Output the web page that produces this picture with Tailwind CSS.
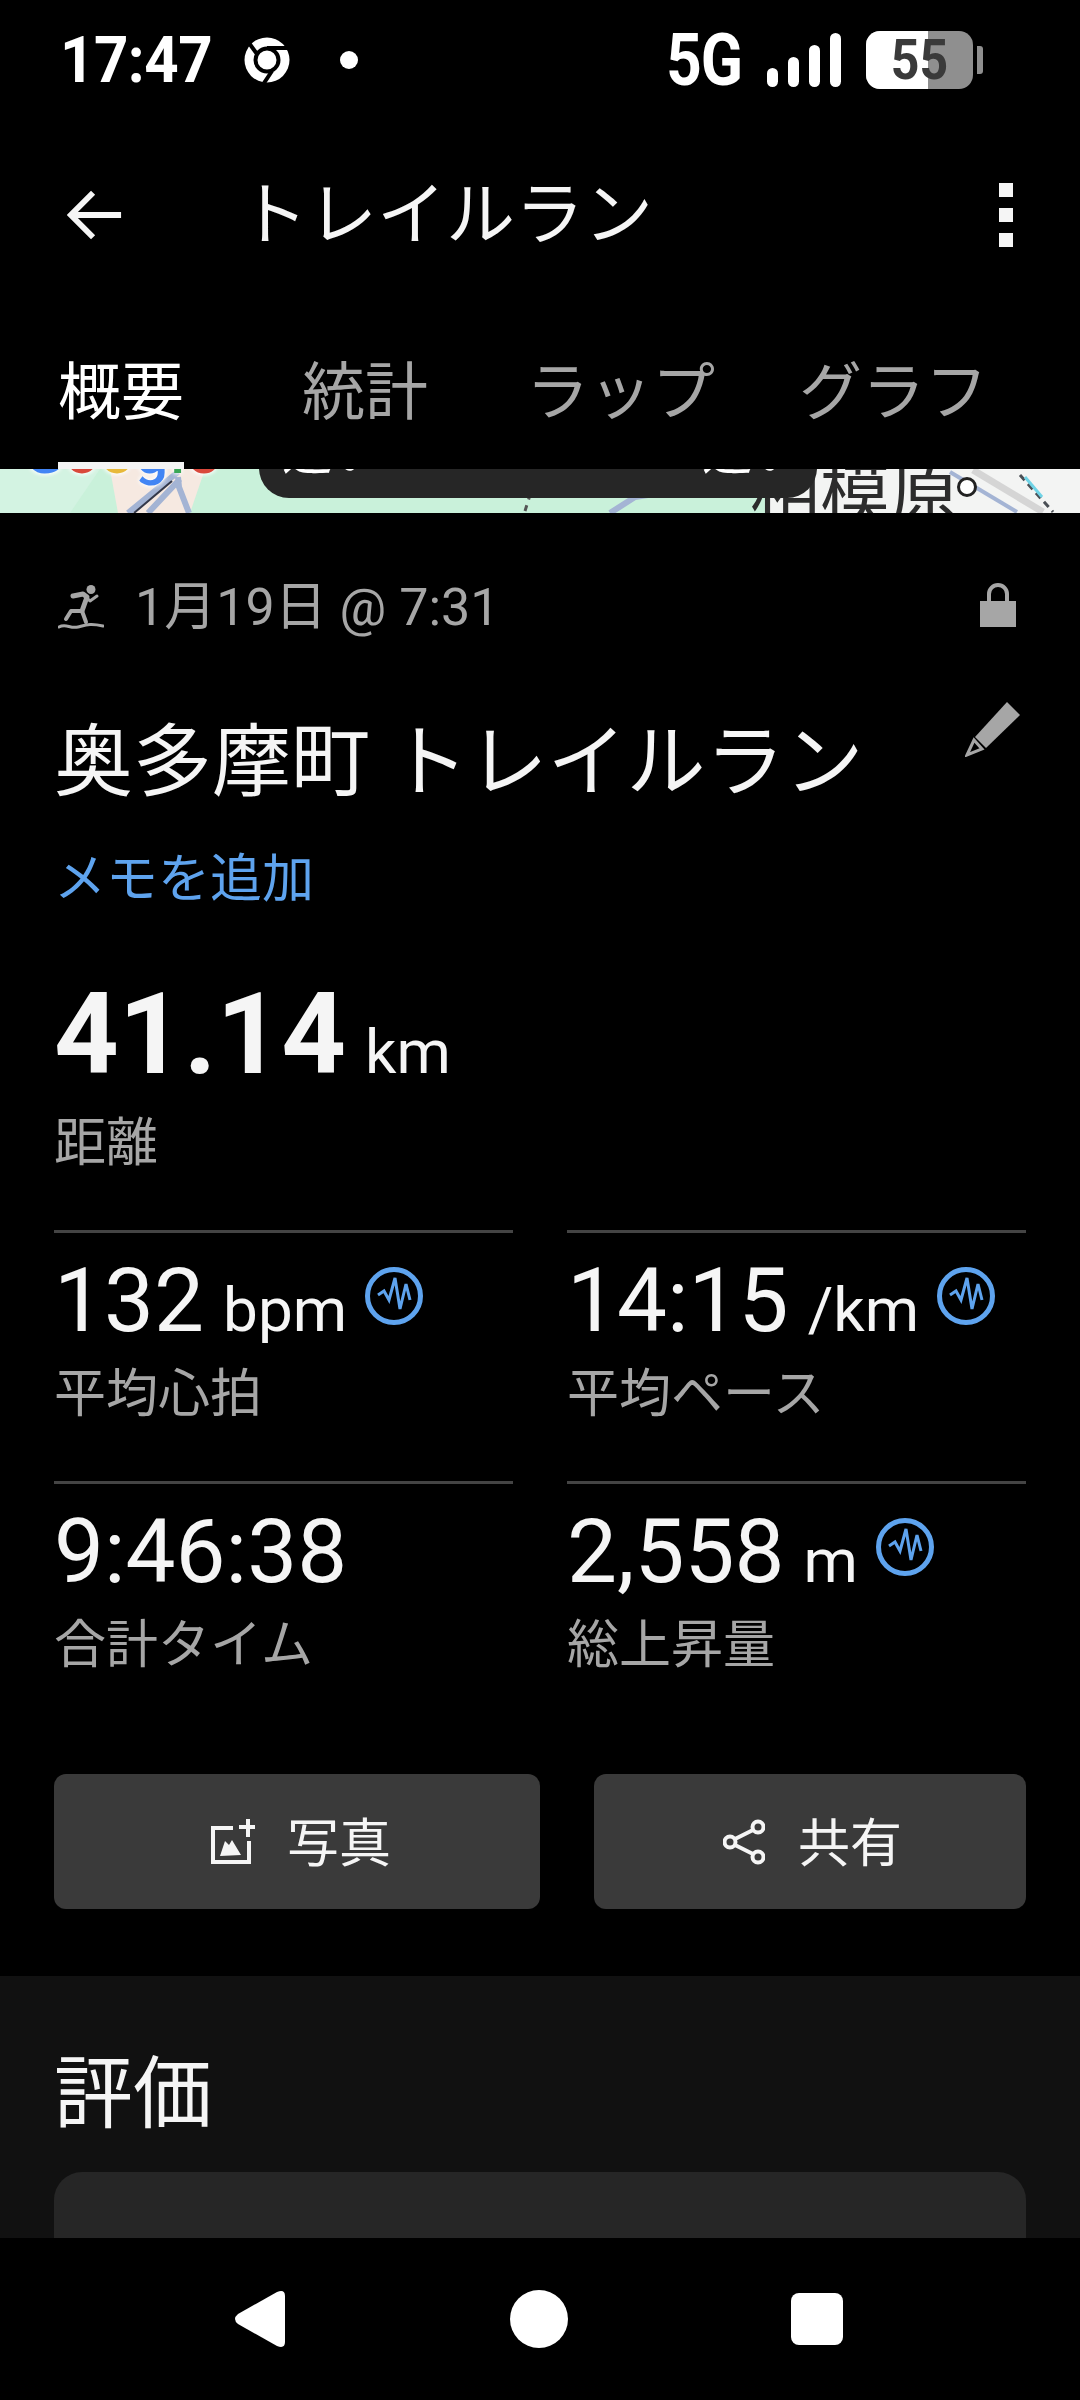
<!DOCTYPE html>
<html lang="ja">
<head>
<meta charset="utf-8">
<script src="https://cdn.jsdelivr.net/npm/@tailwindcss/browser@4"></script>
</head>
<body class="bg-black">
<div class="relative w-[1080px] h-[2400px] overflow-hidden bg-black text-white font-['Roboto','Noto_Sans_CJK_JP',sans-serif]">

  <!-- status bar -->
  <div class="h-[120px] pl-[60px] pr-[97px] flex items-center justify-between">
    <div class="flex items-center">
      <span class="text-[60px] font-bold leading-none tracking-[-0.5px] w-[184px] scale-y-[1.08] origin-center">17:47</span>
      <svg class="w-[46px] h-[46px]" viewBox="0 0 46 46" fill="none" stroke="#000"><circle cx="23" cy="23" r="22.5" fill="#fff" stroke="none"/><circle cx="23" cy="23" r="11.5" stroke-width="4"/><path d="M5 6L13 17M23 11H46M28 34L20 46" stroke-width="4"/></svg>
      <span class="ml-[50px] w-[18px] h-[18px] rounded-full bg-white"></span>
    </div>
    <div class="flex items-center">
      <span class="text-[62px] font-bold leading-none tracking-[-1px] scale-y-[1.18] origin-center">5G</span>
      <svg class="ml-[25px] w-[74px] h-[54px]" viewBox="0 0 74 54" fill="#fff"><rect x="0" y="35" width="11" height="19" rx="5.5"/><rect x="21" y="24" width="11" height="30" rx="5.5"/><rect x="42" y="12" width="11" height="42" rx="5.5"/><rect x="63" y="0" width="11" height="54" rx="5.5"/></svg>
      <div class="ml-[25px] relative w-[107px] h-[58px] rounded-[14px] bg-[#8f8f8f] overflow-hidden flex items-center justify-center">
        <div class="absolute inset-y-0 left-0 w-[62px] bg-white"></div>
        <span class="relative text-[50px] font-bold leading-none text-[#3a3a3a] scale-y-[1.1]">55</span>
      </div>
      <div class="ml-[4px] w-[6px] h-[28px] rounded-r-[3px] bg-[#8f8f8f]"></div>
    </div>
  </div>

  <!-- toolbar -->
  <div class="h-[188px] pl-[67px] pr-[67px] pt-[2px] flex items-center">
    <svg class="w-[56px] h-[52px]" viewBox="0 0 58 52" fill="none" stroke="#f5f5f5" stroke-width="6"><path d="M3 26H56M27 3L4 26L27 49"/></svg>
    <span class="ml-[116px] text-[69px] leading-none text-[#f5f5f5]">トレイルラン</span>
    <div class="ml-auto flex flex-col gap-[11px]">
      <span class="block w-[14px] h-[14px] bg-[#f5f5f5]"></span>
      <span class="block w-[14px] h-[14px] bg-[#f5f5f5]"></span>
      <span class="block w-[14px] h-[14px] bg-[#f5f5f5]"></span>
    </div>
  </div>

  <!-- tabs -->
  <div class="h-[161px] pt-[53px] pl-[58px] flex items-start text-[63px] leading-none text-[#a6a6a6]">
    <span class="w-[244px] text-white">概要</span>
    <span class="w-[224px]">統計</span>
    <span class="w-[273px]">ラップ</span>
    <span>グラフ</span>
  </div>

  <!-- map strip -->
  <div class="relative h-[44px] bg-[#c9f1da] overflow-hidden">
    <svg class="absolute inset-0 w-[1080px] h-[44px]" viewBox="0 0 1080 44" fill="none">
      <path d="M110 0L118 44H190L205 0Z" fill="#f6e9e1"/>
      <path d="M760 0H1080V44H768Z" fill="#f3f4f3"/>
      <path d="M0 0H100L70 44H0Z" fill="#d3f3e2"/>
      <path d="M128 44L178 3M148 44L180 10M178 8L179 18L189 44" stroke="#a4b4d4" stroke-width="6"/>
      <path d="M134 44L172 12" stroke="#33384a" stroke-width="2"/>
      <path d="M610 44L635 28L660 24L690 12" stroke="#a4b4d4" stroke-width="6"/>
      <path d="M525 42L530 26" stroke="#555" stroke-width="3" stroke-dasharray="6 6"/>
      <path d="M973 1L1043 43" stroke="#d5d5d5" stroke-width="7"/>
      <path d="M950 3L1017 43" stroke="#a4b4d4" stroke-width="4"/>
      <path d="M1020 6L1053 43" stroke="#4a4f55" stroke-width="3" stroke-dasharray="7 5"/>
      <path d="M1025 8L1042 28" stroke="#6fd3e6" stroke-width="3"/>
    </svg>
    <span class="absolute left-[750px] -top-[9px] text-[70px] leading-[70px] text-[#2c2c2c]">相模原</span>
    <div class="absolute left-[259px] -top-[30px] w-[558px] h-[59px] rounded-b-[30px] bg-[#262626]"></div>
    <span class="absolute left-[282px] -top-[46px] text-[50px] leading-[60px] text-white">近い</span>
    <span class="absolute left-[702px] -top-[46px] text-[50px] leading-[60px] text-white">近い</span>
    <span class="absolute left-[957px] top-[8px] w-[20px] h-[20px] rounded-full border-[3px] border-[#222] bg-white"></span>
    <span class="absolute left-[24px] -top-[48px] text-[58px] leading-[64px] font-medium tracking-[2px] [text-shadow:0_0_5px_#fff,0_0_5px_#fff]"><span class="text-[#4285f4]">G</span><span class="text-[#d9483b]">o</span><span class="text-[#e8b93a]">o</span><span class="text-[#4285f4]">g</span><span class="text-[#3aa757]">l</span><span class="text-[#d9483b]">e</span></span>
  </div>
  <div class="absolute left-[58px] top-[462px] w-[126px] h-[7px] bg-[#f4f4f4]"></div>

  <!-- content -->
  <div class="h-[1725px] px-[54px]">
    <div class="pt-[64px] flex items-center h-[126px]">
      <svg class="ml-[4px] w-[46px] h-[46px]" viewBox="0 0 46 46" fill="none" stroke="#a6a6a6" stroke-linecap="round" stroke-linejoin="round"><circle cx="33" cy="4.5" r="4.5" fill="#a6a6a6" stroke="none"/><path d="M15 11L25 9L29 12L24 26" stroke-width="5"/><path d="M29 13L32 16L39 11" stroke-width="3"/><path d="M24 26L13 26L8 34M24 26L28 37" stroke-width="4"/><path d="M1 42C8 38 12 44 20 42S32 38 45 41" stroke-width="3"/></svg>
      <span class="ml-[31px] text-[52px] leading-none text-[#a6a6a6]">1月19日 @ 7:31</span>
      <svg class="ml-auto mb-[6px] mr-[10px] w-[36px] h-[44px]" viewBox="0 0 36 44" fill="#a6a6a6"><path d="M0 18H36V44H0Z"/><path d="M9 18V11a9 9 0 0 1 18 0V18" fill="none" stroke="#a6a6a6" stroke-width="4"/></svg>
    </div>
    <div class="mt-[79px] flex items-start h-[90px]">
      <h1 class="text-[79px] leading-[90px] font-normal text-[#f5f5f5] whitespace-nowrap">奥多摩町 トレイルラン</h1>
      <svg class="ml-auto mr-[6px] -mt-[16px] w-[55px] h-[55px]" viewBox="0 0 55 55"><path d="M42 0L55 13L21 46L10 35Z" fill="#a6a6a6"/><path d="M2 53L9 38L17 47Z" fill="none" stroke="#a6a6a6" stroke-width="3"/></svg>
    </div>
    <div class="mt-[42px] text-[52px] leading-[60px] text-[#5ea3ee]">メモを追加</div>

    <div class="mt-[65px] flex items-baseline h-[120px]">
      <span class="text-[113px] leading-[120px] font-bold text-[#f5f5f5]">41.14</span>
      <span class="ml-[19px] text-[62px] leading-none text-[#f5f5f5]">km</span>
    </div>
    <div class="mt-[19px] text-[52px] leading-[60px] text-[#a6a6a6]">距離</div>

    <div class="mt-[56px] grid grid-cols-[459px_459px] gap-x-[54px]">
      <div class="border-t-[3px] border-[#444] h-[251px] pt-[18px]">
        <div class="flex items-baseline h-[100px] text-[#f5f5f5]"><span class="text-[89px] leading-[100px]">132</span><span class="ml-[19px] text-[62px] leading-none">bpm</span>
          <svg class="self-start mt-[16px] ml-[18px] w-[58px] h-[58px]" viewBox="0 0 58 58" fill="none" stroke="#5ea3ee"><circle cx="29" cy="29" r="26.5" stroke-width="5"/><path d="M13 28L19 24L24 33L30 11L35 42L41 17L45 33" stroke-width="3"/></svg>
        </div>
        <div class="mt-[14px] text-[52px] leading-[60px] text-[#a6a6a6]">平均心拍</div>
      </div>
      <div class="border-t-[3px] border-[#444] h-[251px] pt-[18px]">
        <div class="flex items-baseline h-[100px] text-[#f5f5f5]"><span class="text-[89px] leading-[100px]">14:15</span><span class="ml-[19px] text-[62px] leading-none">/km</span>
          <svg class="self-start mt-[16px] ml-[18px] w-[58px] h-[58px]" viewBox="0 0 58 58" fill="none" stroke="#5ea3ee"><circle cx="29" cy="29" r="26.5" stroke-width="5"/><path d="M13 28L19 24L24 33L30 11L35 42L41 17L45 33" stroke-width="3"/></svg>
        </div>
        <div class="mt-[14px] text-[52px] leading-[60px] text-[#a6a6a6]">平均ペース</div>
      </div>
      <div class="border-t-[3px] border-[#444] h-[251px] pt-[18px]">
        <div class="flex items-baseline h-[100px] text-[#f5f5f5]"><span class="text-[89px] leading-[100px]">9:46:38</span></div>
        <div class="mt-[14px] text-[52px] leading-[60px] text-[#a6a6a6]">合計タイム</div>
      </div>
      <div class="border-t-[3px] border-[#444] h-[251px] pt-[18px]">
        <div class="flex items-baseline h-[100px] text-[#f5f5f5]"><span class="text-[89px] leading-[100px]">2,558</span><span class="ml-[19px] text-[62px] leading-none">m</span>
          <svg class="self-start mt-[16px] ml-[18px] w-[58px] h-[58px]" viewBox="0 0 58 58" fill="none" stroke="#5ea3ee"><circle cx="29" cy="29" r="26.5" stroke-width="5"/><path d="M13 28L19 24L24 33L30 11L35 42L41 17L45 33" stroke-width="3"/></svg>
        </div>
        <div class="mt-[14px] text-[52px] leading-[60px] text-[#a6a6a6]">総上昇量</div>
      </div>
    </div>

    <div class="mt-[42px] flex gap-[54px]">
      <div class="w-[486px] h-[135px] rounded-[12px] bg-[#3a3a3a] flex items-center justify-center gap-[32px] pl-[8px]">
        <svg class="w-[44px] h-[45px]" viewBox="0 0 44 45" fill="#f5f5f5"><path d="M0 7H22V11H4V41H36V22H40V45H0Z"/><path d="M35 0H39V6H44V10H39V18H35V10H28V6H35Z"/><path d="M9 37L14 22L18 26L21 21L30 36Z"/></svg>
        <span class="mt-[7px] text-[52px] leading-none text-[#f5f5f5]">写真</span>
      </div>
      <div class="w-[432px] h-[135px] rounded-[12px] bg-[#3a3a3a] flex items-center justify-center gap-[33px] pl-[5px]">
        <svg class="w-[42px] h-[46px]" viewBox="0 0 42 46" fill="none" stroke="#f5f5f5" stroke-width="4"><circle cx="35" cy="8" r="5.5"/><circle cx="7" cy="23" r="5.5"/><circle cx="35" cy="38" r="5.5"/><path d="M12 20L30 11M12 26L30 35"/></svg>
        <span class="mt-[7px] text-[52px] leading-none text-[#f5f5f5]">共有</span>
      </div>
    </div>

    <!-- rating -->
    <div class="mt-[67px] -mx-[54px] h-[262px] bg-[#111] px-[54px] overflow-hidden">
      <div class="pt-[74px] text-[79px] leading-[90px] text-[#f5f5f5]">評価</div>
      <div class="mt-[32px] h-[120px] rounded-t-[28px] bg-[#262626]"></div>
    </div>
  </div>

  <!-- nav -->
  <div class="h-[162px] bg-black flex items-center justify-between pl-[235px] pr-[237px]">
    <svg class="w-[52px] h-[58px]" viewBox="0 0 52 58" fill="#fff"><path d="M3 24L42 2Q50 -1 50 6V52Q50 59 42 56L3 34Q-3 29 3 24Z"/></svg>
    <span class="w-[58px] h-[58px] rounded-full bg-white"></span>
    <span class="w-[52px] h-[52px] rounded-[8px] bg-white"></span>
  </div>
</div>
</body>
</html>
